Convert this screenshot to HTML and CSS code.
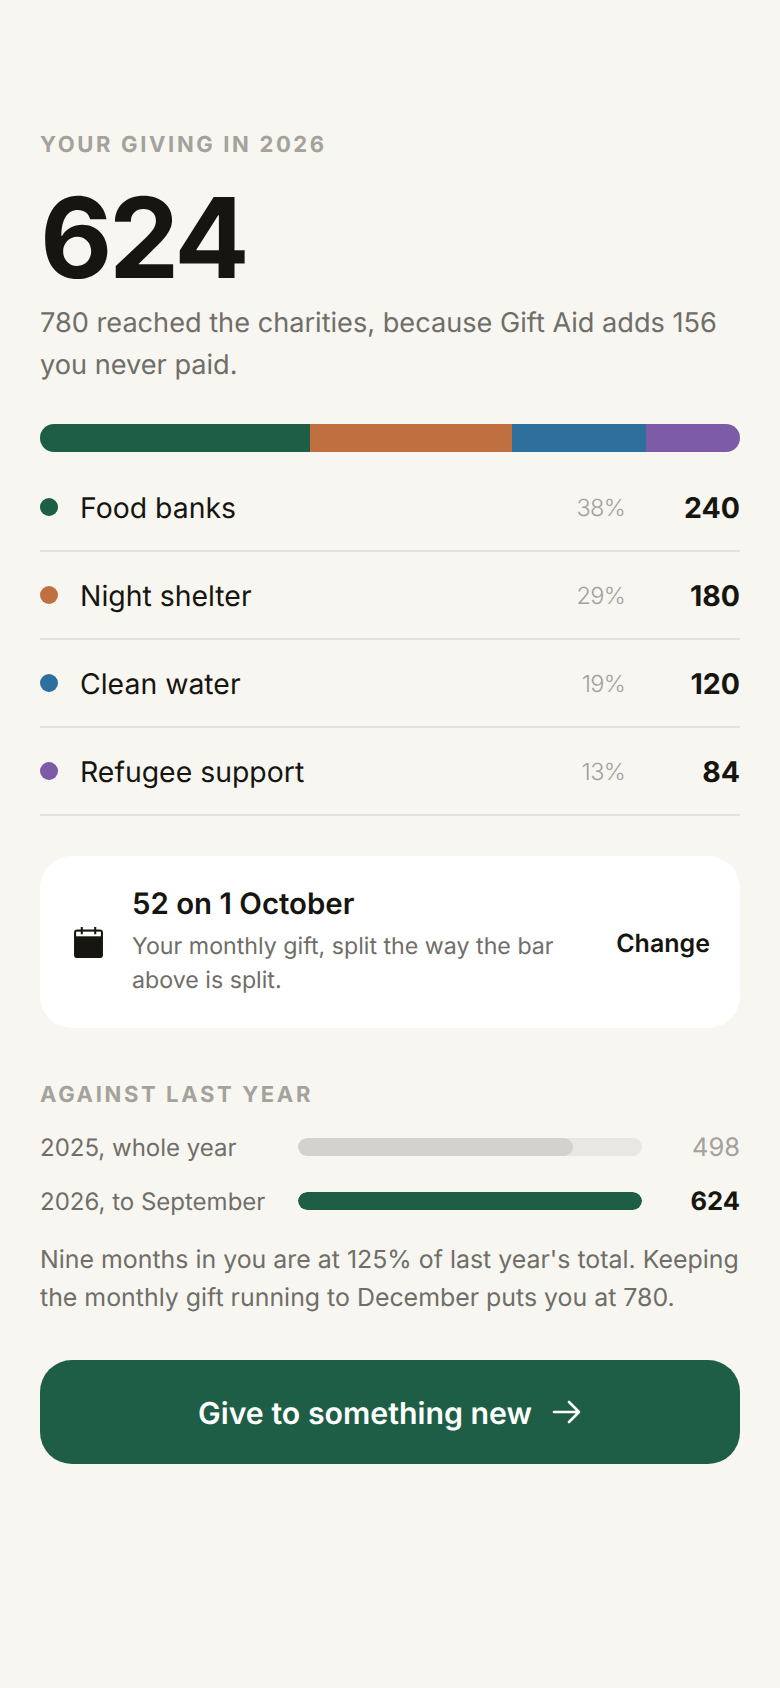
FILE: index.html
```html
<!DOCTYPE html>
<html lang="en">
<head>
<meta charset="utf-8">
<title>Your giving in 2026</title>
<link rel="stylesheet" href="styles.css">
</head>
<body>
<main class="page">
  <p class="eyebrow">YOUR GIVING IN 2026</p>
  <h1 class="total">624</h1>
  <p class="lead">780 reached the charities, because Gift Aid adds 156 you never paid.</p>

  <div class="split">
    <span class="seg seg-green"></span>
    <span class="seg seg-orange"></span>
    <span class="seg seg-blue"></span>
    <span class="seg seg-purple"></span>
  </div>

  <ul class="rows">
    <li class="row"><span class="dot seg-green"></span><span class="name">Food banks</span><span class="pct">38%</span><span class="amt">240</span></li>
    <li class="row"><span class="dot seg-orange"></span><span class="name">Night shelter</span><span class="pct">29%</span><span class="amt">180</span></li>
    <li class="row"><span class="dot seg-blue"></span><span class="name">Clean water</span><span class="pct">19%</span><span class="amt">120</span></li>
    <li class="row"><span class="dot seg-purple"></span><span class="name">Refugee support</span><span class="pct">13%</span><span class="amt">84</span></li>
  </ul>

  <section class="card">
    <svg class="cal" viewBox="0 0 28 30" aria-hidden="true">
      <path class="cal-body" d="M3 2.500h22a3 3 0 0 1 3 3V27a3 3 0 0 1-3 3H3a3 3 0 0 1-3-3V5.500a3 3 0 0 1 3-3z"/>
      <rect class="cal-band" x="2" y="4.500" width="24" height="4.500"/>
      <rect class="cal-pin" x="6.500" y="0" width="2" height="7"/>
      <rect class="cal-pin" x="19.500" y="0" width="2" height="7"/>
    </svg>
    <div class="card-text">
      <h2 class="card-title">52 on 1 October</h2>
      <p class="card-desc">Your monthly gift, split the way the bar above is split.</p>
    </div>
    <span class="change">Change</span>
  </section>

  <p class="eyebrow eyebrow-second">AGAINST LAST YEAR</p>
  <div class="compare">
    <span class="c-label">2025, whole year</span>
    <span class="track"><span class="fill fill-old"></span></span>
    <span class="c-val">498</span>
  </div>
  <div class="compare">
    <span class="c-label">2026, to September</span>
    <span class="track"><span class="fill fill-new"></span></span>
    <span class="c-val c-val-strong">624</span>
  </div>
  <p class="note">Nine months in you are at 125% of last year's total. Keeping the monthly gift running to December puts you at 780.</p>

  <a class="cta" href="#">
    <span class="cta-label">Give to something new</span>
    <svg class="arrow" viewBox="0 0 30 24" aria-hidden="true"><path d="M2 12h25M17 2l10 10-10 10"/></svg>
  </a>
</main>
</body>
</html>
```
FILE: styles.css
```css
* { box-sizing: border-box; }
html, body { margin: 0; padding: 0; }
body {
  background: #f8f6f1;
  color: #161510;
  font-family: Inter, "Liberation Sans", sans-serif;
  text-rendering: geometricPrecision;
  width: 780px;
  height: 1688px;
  overflow: hidden;
}
.page { padding: 131px 40px 0; }
.eyebrow {
  margin: 0;
  font-size: 22px;
  line-height: 28px;
  font-weight: 700;
  letter-spacing: 0.12em;
  color: #a3a29b;
}
.total {
  margin: 23px 0 0;
  font-size: 111.500px;
  line-height: 112px;
  font-weight: 700;
  letter-spacing: -0.03em;
  color: #161510;
}
.lead {
  margin: 8px 0 0;
  font-size: 27.150px;
  line-height: 42px;
  color: #6f6e68;
}
.split {
  display: flex;
  height: 28px;
  margin-top: 38px;
  border-radius: 14px;
  overflow: hidden;
}
.seg { display: block; }
.split .seg-green { flex: 270; }
.split .seg-orange { flex: 202; }
.split .seg-blue { flex: 134; }
.split .seg-purple { flex: 94; }
.seg-green { background: #1e5e46; }
.seg-orange { background: #c07040; }
.seg-blue { background: #2e6f9e; }
.seg-purple { background: #7d5ba6; }
.rows { list-style: none; margin: 12px 0 0; padding: 0; }
.row {
  display: flex;
  align-items: center;
  height: 88px;
  border-bottom: 2px solid #e2e0da;
}
.dot { width: 18px; height: 18px; border-radius: 50%; margin-right: 22px; flex: none; }
.name { flex: 1; padding-top: 1px; font-size: 28.400px; font-weight: 400; }
.pct { font-size: 23.500px; font-weight: 300; letter-spacing: -0.03em; color: #a3a29b; }
.amt { width: 115px; text-align: right; font-size: 28.500px; font-weight: 700; }
.card {
  display: flex;
  align-items: center;
  margin-top: 40px;
  height: 172px;
  padding: 0 30px 0 34px;
  background: #fff;
  border-radius: 32px;
}
.cal { width: 29px; height: 31px; flex: none; margin-right: 29px; }
.cal-body { fill: #161510; }
.cal-band { fill: #fff; }
.cal-pin { fill: #161510; }
.card-text { flex: 1; padding-right: 40px; }
.card-title { margin: 0; font-size: 29.400px; line-height: 36px; font-weight: 600; }
.card-desc { margin: 6px 0 0; font-size: 23.200px; line-height: 34px; color: #6f6e68; }
.change { margin-top: 4px; font-size: 25px; font-weight: 600; }
.eyebrow-second { margin-top: 53px; }
.compare {
  display: flex;
  align-items: center;
  height: 54px;
  font-size: 24px;
}
.eyebrow-second + .compare { margin-top: 11px; }
.c-label { width: 258px; color: #6f6e68; }
.track { width: 344px; height: 18px; border-radius: 9px; background: #e9e7e2; overflow: hidden; display: block; }
.fill { display: block; height: 100%; border-radius: 9px; }
.fill-old { width: 79.800%; background: #d4d2cd; }
.fill-new { width: 100%; background: #1e5e46; }
.c-val { flex: 1; text-align: right; font-size: 25.500px; color: #a3a29b; }
.c-val-strong { color: #161510; font-weight: 700; }
.note { margin: 13px 0 0; font-size: 24.900px; line-height: 38px; color: #6f6e68; }
.cta {
  display: flex;
  align-items: center;
  justify-content: center;
  gap: 20px;
  margin-top: 43px;
  height: 104px;
  border-radius: 32px;
  background: #1e5e46;
  color: #fff;
  font-size: 30.300px;
  font-weight: 600;
  text-decoration: none;
}
.cta-label { padding-top: 3px; }
.arrow { width: 30px; height: 24px; fill: none; stroke: #fff; stroke-width: 2.600; stroke-linecap: round; stroke-linejoin: round; }
```
